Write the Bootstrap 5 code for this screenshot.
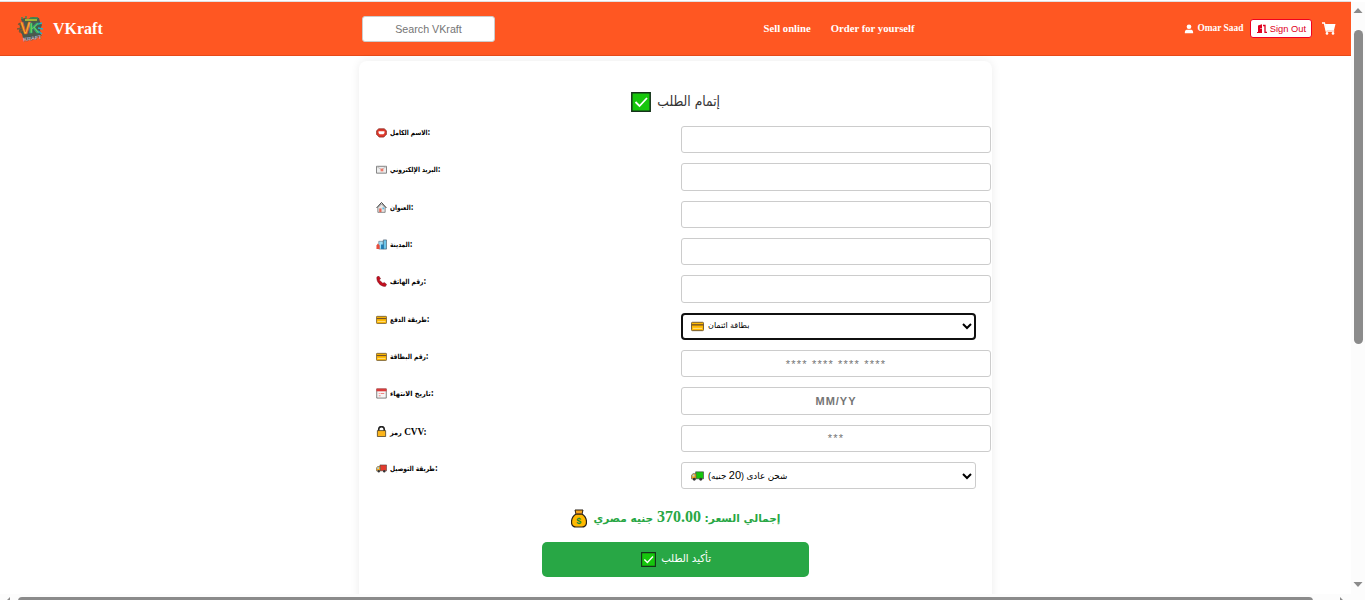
<!DOCTYPE html>
<html lang="en">
<head>
<meta charset="utf-8">
<title>VKraft</title>
<link href="https://cdn.jsdelivr.net/npm/bootstrap@5.3.0/dist/css/bootstrap.min.css" rel="stylesheet">
<style>
html,body{height:600px;overflow:hidden}
body{font-family:"Liberation Serif","DejaVu Sans",serif;background:#fff;color:#000}
.page{width:1351px;height:594px;overflow:hidden;border-top:1px solid #fff}
.topbar{height:55px;background:#ff5722;border-top:1px solid #e0e0e0;border-bottom:1px solid #e64a19;color:#fff;font-weight:700;display:grid;grid-template-columns:362px 401.5px 420px 1fr;align-items:center;line-height:1}
.brand{padding-left:17px;gap:10px;font-size:16px}
.search{width:133px;height:26px;border:1px solid #ccc;border-radius:3px;background:#fff;font:10.7px "Liberation Sans",sans-serif;text-align:center}
.search::placeholder,.field::placeholder{color:#757575;opacity:1}
.menu{font-size:10.7px;gap:20px}
.user{font-size:9.4px}
.signout{width:62px;height:19px;border:1px solid #f00020;border-radius:3px;background:#fff;color:#e00020;font:9.3px "Liberation Sans",sans-serif;gap:3px;margin-left:7px;padding:0;flex:none;white-space:nowrap}
.cart{margin-left:10px}
.sheet{width:633px;height:560px;margin:5px 0 0 359px;padding:28px 0 0 17px;border-radius:8px;box-shadow:0 0 10px rgba(0,0,0,.08)}
.ar{font-family:"DejaVu Sans",sans-serif;white-space:nowrap;display:inline-block;direction:rtl}
.title{height:37px;width:600px;padding-top:3px;gap:6px;color:#333;line-height:20px}
.title .ar{font-size:14px;transform:scaleX(.88);margin:-1px -4px 0}
.fields{display:grid;grid-template-columns:295px 310px;column-gap:10px;grid-auto-rows:37.33px;align-items:start}
.lbl{font-size:10px;font-weight:700;height:14px;line-height:14px;gap:3px;white-space:nowrap}
.lbl svg{width:11px;height:11px;flex:none;margin-top:1px}
.lbl>span{transform:scaleX(.84);transform-origin:left;margin-top:-1px}
.lbl>.mixed{transform:scaleX(.93);margin-top:0}
.lbl .ar{font-size:7px}
.field{width:310px;height:27.33px;border:1px solid #ccc;border-radius:3px;background:#fff;text-align:center;font:11px "Liberation Sans",sans-serif;letter-spacing:1px;padding:0}
.stars{letter-spacing:1.2px}
.pick{width:295px;letter-spacing:0;padding:0 3px 0 9px;line-height:24px;gap:4px}
.pick .ar{font-size:8px;font-family:"Liberation Sans","DejaVu Sans",sans-serif}
.pick .ar.ship{font-size:8.8px}
.ship span{font-size:11px}
.pick.active{border:2px solid #101010;border-radius:4px;padding:0 2px 0 8px}
.total{width:600px;height:24px;margin-top:6px;gap:6px;color:#28a745;font-weight:700;font-size:16px;line-height:20px;padding-top:2px}
.total .ar{font-size:10.6px}
.total b{font:700 16px "Liberation Serif",serif}
.confirm{display:flex;width:267px;height:35px;margin:13px 0 0 166px;border:0;border-radius:5px;background:#28a745;color:#fff;gap:5px;padding:0 0 0 2px}
.confirm .ar{font-size:11px;transform:scaleX(.92);margin:-1px -2px 0}
.vbar{position:absolute;left:1351px;top:2px;width:14px;height:598px;background:#fcfcfc}
.hbar{position:absolute;left:0;top:594px;width:1365px;height:6px;background:#fcfcfc}
.hbar svg,.vbar svg{display:block}
</style>
</head>
<body>
<svg width="0" height="0" class="position-absolute">
<symbol id="check" viewBox="0 0 20 20"><path fill="#16c60c" stroke="#15331a" stroke-width="1.5" d="M.8.8h18.4v18.4H.8z"/><path d="m4.5 10 4 4 7.5-8" fill="none" stroke="#fff" stroke-width="1.8"/></symbol>
<symbol id="cardicon" viewBox="0 0 14 12"><rect x=".5" y="2" width="13" height="9" rx="1" fill="#ffb900" stroke="#695334"/><path fill="#765326" d="M1 4h12v1.5H1z"/><path stroke="#ffe69a" d="M2 8.5h10"/></symbol>
<symbol id="truck" viewBox="0 0 14 12"><path d="M5 1.5h8.5V9H5z" fill="currentColor" stroke="#444" stroke-width=".7"/><path d="M.5 9V5.5L2 3.5h3.5V9z" fill="#f7a51c" stroke="#555" stroke-width=".7"/><path d="M1.7 4.5h2v2h-2z" fill="#9bdcf4"/><circle cx="3.5" cy="9.5" r="1.5" fill="#333"/><circle cx="10.5" cy="9.5" r="1.5" fill="#333"/></symbol>
<symbol id="chev" viewBox="0 0 10 8"><path d="m1 2 4 4 4-4" fill="none" stroke="#000" stroke-width="2"/></symbol>
</svg>
<div class="page">
<nav class="topbar">
 <div class="brand d-flex align-items-center">
  <svg width="26" height="26" viewBox="0 0 26 26"><path d="m4 3 4-1 3 1 5-2 6 1 1 4 2 3-2 5 1 5-5 3-9 2-4-2-1-4-3-3 1-4-1-4 3-1z" fill="#4b5a4c"/><path d="M4 2h2M8 1h2M13 2h8" stroke="#3c8d52" stroke-width="1.5"/><path d="m1 8 4 1M0 13l5-1M2 16l4-2" stroke="#7d5836" stroke-width="1.5"/><path d="m21 8 4-1M21 12l5 1M21 15l4 3" stroke="#22b4c8" stroke-width="1.5"/><path d="M8 4h12" stroke="#bfd52c" stroke-width="1.5"/><g font-family="Liberation Sans" font-weight="700"><text x="3" y="18" font-size="16" fill="#ffb329" stroke="#d9482b" stroke-width=".6">V</text><text x="12" y="17" font-size="15" fill="#70d04a" stroke="#159b92" stroke-width=".6">K</text><text x="6" y="24.500" font-size="5.500" fill="#dde" stroke="#334" stroke-width=".2" transform="rotate(-8 13 22)">KRAFT</text></g></svg>
  <span>VKraft</span>
 </div>
 <input class="search" placeholder="Search VKraft">
 <div class="menu d-flex"><span>Sell online</span><span>Order for yourself</span></div>
 <div class="user d-flex align-items-center">
  <svg width="10" height="10" viewBox="0 0 12 12" class="me-1"><circle cx="6" cy="3.3" r="2.8" fill="#fff"/><path d="M1 11c0-5 3-4 5-4s5-1 5 4z" fill="#fff"/></svg>
  <span class="text-nowrap">Omar Saad</span>
  <button class="signout d-flex align-items-center justify-content-center"><svg width="10" height="9" viewBox="0 0 10 9"><path d="M1 1.5 5 .3V9H1zM0 8h2v1H0z" fill="#e00020"/><path d="M6 1.5h2V8.3h2" fill="none" stroke="#e00020" stroke-width="1.3"/><path d="M4 4v1" stroke="#fff"/></svg><span>Sign Out</span></button>
  <svg class="cart" width="14" height="13" viewBox="0 0 14 13"><path d="M0 1h2.4l1.8 8h8" fill="none" stroke="#fff" stroke-width="1.4"/><path d="M3 2h10.5L12 8H4z" fill="#fff"/><circle cx="5" cy="11.4" r="1.3" fill="#fff"/><circle cx="11" cy="11.4" r="1.3" fill="#fff"/></svg>
 </div>
</nav>
<main class="sheet">
 <div class="title d-flex justify-content-center"><svg width="20" height="20"><use href="#check"/></svg><span class="ar">إتمام الطلب</span></div>
 <div class="fields">
  <label class="lbl d-flex"><svg viewBox="0 0 12 12"><path d="M.7 4 3 2h6l2.300 2v4L8.500 11h-5L.7 8z" fill="#e0392b" stroke="#7f1d16" stroke-width=".8"/><path d="M2.800 4.500h6.400v2L8 8H4L2.800 6.500z" fill="#fff"/></svg><span><span class="ar">الاسم الكامل</span>:</span></label><input class="field">
  <label class="lbl d-flex"><svg viewBox="0 0 12 12"><path d="M.5 2.500h11v7.500H.5z" fill="#eee" stroke="#777"/><path d="m1 3 5 3 5-3" fill="none" stroke="#bbb"/><path d="M5 5h3v3H5z" fill="#f07868"/></svg><span><span class="ar">البريد الإلكتروني</span>:</span></label><input class="field">
  <label class="lbl d-flex"><svg viewBox="0 0 12 12"><path d="M2 6v5.3h8V6L6 2z" fill="#e6e6e6" stroke="#555" stroke-width=".7"/><path d="m.6 6.5 5.4-6 5.4 6" fill="none" stroke="#333"/><path d="M3.5 7H6v4H3.5z" fill="#e76755"/><path d="M7 6h2v2H7z" fill="#58bce5"/></svg><span><span class="ar">العنوان</span>:</span></label><input class="field">
  <label class="lbl d-flex"><svg viewBox="0 0 12 12"><path d="M3 2.500h5V11H3z" fill="#9bdff8" stroke="#567" stroke-width=".6"/><path d="M8 1h3.5v10H8z" fill="#6cc5ea" stroke="#345" stroke-width=".6"/><path d="M.5 11V7L2 5l2 2v4z" fill="#e74c3c"/><path d="M5.500 6h3v5h-3z" fill="#207bb1"/></svg><span><span class="ar">المدينة</span>:</span></label><input class="field">
  <label class="lbl d-flex"><svg viewBox="0 0 12 12"><path d="m1 1 2-1 2 3-1.5 1.3L7.5 8 9 7l2.5 2-1 2.3C5 12 0 6 1 1z" fill="#c50f1f" stroke="#6b101a" stroke-width=".5"/></svg><span><span class="ar">رقم الهاتف</span>:</span></label><input class="field">
  <label class="lbl d-flex"><svg><use href="#cardicon"/></svg><span><span class="ar">طريقة الدفع</span>:</span></label><div class="field pick active d-flex align-items-center"><svg width="13" height="12"><use href="#cardicon"/></svg><span class="ar">بطاقة ائتمان</span><svg class="ms-auto" width="10" height="8"><use href="#chev"/></svg></div>
  <label class="lbl d-flex"><svg><use href="#cardicon"/></svg><span><span class="ar">رقم البطاقة</span>:</span></label><input class="field stars" placeholder="**** **** **** ****">
  <label class="lbl d-flex"><svg viewBox="0 0 12 12"><path d="M.8 1h10.4v10H.8z" fill="#f6f6f6" stroke="#555" stroke-width=".8"/><path d="M.5.6h11v3H.5z" fill="#d83b3b"/><path d="M3 6h1M5 6h4M3 8.5h2" stroke="#e77"/></svg><span style="transform:scaleX(.94)"><span class="ar">تاريخ الانتهاء</span>:</span></label><input class="field fw-bold" placeholder="MM/YY">
  <label class="lbl d-flex"><svg viewBox="0 0 12 12"><path d="M3 6V3.500C3-.3 9-.3 9 3.500V6" fill="none" stroke="#222" stroke-width="1.8"/><path d="M1.500 5h9v6.500h-9z" fill="#fcb51b" stroke="#3c3320" stroke-width=".8"/></svg><span class="mixed"><span class="ar">رمز</span> CVV:</span></label><input class="field stars" placeholder="***">
  <label class="lbl d-flex"><svg style="color:#e33b2e"><use href="#truck"/></svg><span><span class="ar">طريقة التوصيل</span>:</span></label><div class="field pick d-flex align-items-center"><svg width="13" height="12" style="color:#16c60c"><use href="#truck"/></svg><span class="ar ship">شحن عادى (<span>20</span> جنيه)</span><svg class="ms-auto" width="10" height="8"><use href="#chev"/></svg></div>
 </div>
 <div class="total d-flex justify-content-center align-items-center"><svg width="16" height="19" viewBox="0 0 16 19"><path d="M5 5C-1 9-1 18 5 18h6c6 0 6-9 0-13z" fill="#ffb900" stroke="#282016" stroke-width="1.2"/><path d="M4 1h8l-1 4H5z" fill="#f7a51c" stroke="#282016"/><path d="M5 4.5h6" stroke="#845526"/><text x="5.3" y="15" font-size="9" font-weight="700" fill="#168b35" font-family="Liberation Sans">$</text></svg><span class="ar">إجمالي السعر: <b>370.00</b> جنيه مصري</span></div>
 <button class="confirm align-items-center justify-content-center"><svg width="15" height="15"><use href="#check"/></svg><span class="ar">تأكيد الطلب</span></button>
</main>
</div>
<div class="vbar"><svg width="14" height="598"><path d="m2.5 11 4.5-5 4.5 5z" fill="#8b8b8b"/><rect x="3" y="28" width="9" height="314" rx="4.5" fill="#8b8b8b"/><path d="m2.5 580 4.5 5 4.5-5z" fill="#8b8b8b"/></svg></div>
<div class="hbar"><svg width="1351" height="6"><path d="M7 6 10 3v3zM1340 3l3 3h-3z" fill="#8b8b8b"/><rect x="18" y="3" width="1295" height="9" rx="4" fill="#8b8b8b"/></svg></div>
<script src="https://cdn.jsdelivr.net/npm/bootstrap@5.3.0/dist/js/bootstrap.bundle.min.js"></script>
</body>
</html>
